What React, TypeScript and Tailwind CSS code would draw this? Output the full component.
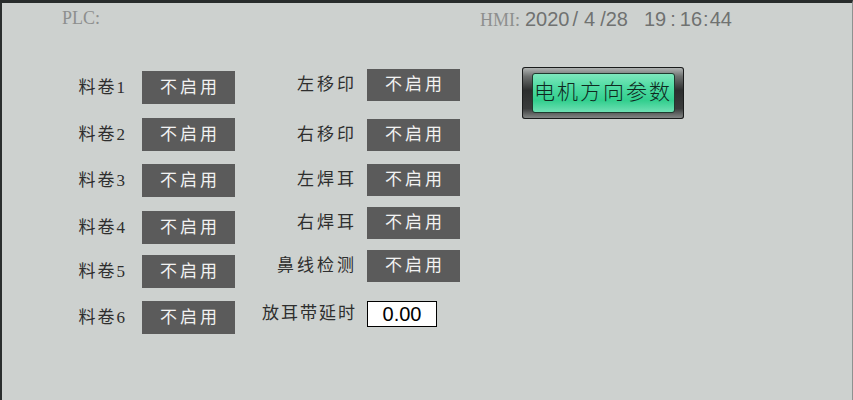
const serif = "font-['Liberation_Serif','Noto_Sans_CJK_SC',serif]"
const sans = "font-['Liberation_Sans','Noto_Sans_CJK_SC',sans-serif]"

const leftRows = [
  { label: '料卷1', mt: 'mt-0' },
  { label: '料卷2', mt: 'mt-[14px]' },
  { label: '料卷3', mt: 'mt-[13px]' },
  { label: '料卷4', mt: 'mt-[14px]' },
  { label: '料卷5', mt: 'mt-[11px]' },
  { label: '料卷6', mt: 'mt-[13px]' },
]

const rightRows = [
  { label: '左移印', mt: 'mt-0' },
  { label: '右移印', mt: 'mt-[18px]' },
  { label: '左焊耳', mt: 'mt-[13px]' },
  { label: '右焊耳', mt: 'mt-[11px]' },
  { label: '鼻线检测', mt: 'mt-[11px]' },
]

function OffButton({ tall = false }: { tall?: boolean }) {
  return (
    <div
      className={`flex w-[93px] items-center justify-center bg-[#5b5b5b] pl-[3px] text-[17px] tracking-[3px] text-[#f2f2f2] ${serif} ${
        tall ? 'h-[33px]' : 'h-[32px]'
      }`}
    >
      不启用
    </div>
  )
}

export default function App() {
  return (
    <div className="flex h-[400px] w-[853px] flex-col overflow-hidden border-t-[3px] border-l-2 border-r border-t-[#282c2c] border-l-[#2a2e2e] border-r-[#8e9290] bg-[#cdd1cf]">
      <div className="flex h-[31px] items-center">
        <div className={`w-[478px] pl-[60px] text-[18px] text-[#8d8f8e] ${serif}`}>PLC:</div>
        <div className="flex items-baseline text-[#707271]">
          <span className={`text-[18px] text-[#8d8f8e] ${serif}`}>HMI:</span>
          <span className={`ml-[5px] text-[20px] ${sans}`}>2020</span>
          <span className={`ml-[3px] text-[20px] font-light ${sans}`}>/</span>
          <span className={`ml-[6px] text-[20px] ${sans}`}>4</span>
          <span className={`ml-[5px] text-[20px] font-light ${sans}`}>/</span>
          <span className={`text-[20px] ${sans}`}>28</span>
          <span className={`ml-[16px] text-[20px] ${sans}`}>19</span>
          <span className={`mx-[4px] text-[20px] ${sans}`}>:</span>
          <span className={`text-[20px] ${sans}`}>16</span>
          <span className={`mx-[1px] text-[20px] ${sans}`}>:</span>
          <span className={`text-[20px] ${sans}`}>44</span>
        </div>
      </div>

      <div className="mt-[33px] flex pl-[58px]">
        <div className="flex flex-col pt-[4px]">
          {leftRows.map((r) => (
            <div key={r.label} className={`flex items-center ${r.mt}`}>
              <div className={`w-[67px] text-right text-[17px] tracking-[2px] text-[#2e2e2e] ${serif}`}>
                {r.label}
              </div>
              <div className="ml-[15px]">
                <OffButton tall />
              </div>
            </div>
          ))}
        </div>

        <div className="ml-[20px] flex flex-col pt-[2px]">
          {rightRows.map((r) => (
            <div key={r.label} className={`flex items-center ${r.mt}`}>
              <div className={`w-[102px] text-right text-[17px] tracking-[3px] text-[#2e2e2e] ${serif}`}>
                {r.label}
              </div>
              <div className="ml-[10px]">
                <OffButton />
              </div>
            </div>
          ))}
          <div className="mt-[19px] flex items-center">
            <div className={`w-[102px] text-right text-[17px] tracking-[2px] text-[#2e2e2e] ${serif}`}>放耳带延时</div>
            <div
              className={`ml-[10px] flex h-[26px] w-[70px] items-center justify-center border border-black bg-white text-[20px] text-black ${sans}`}
            >
              0.00
            </div>
          </div>
        </div>

        <div className="ml-[62px]">
          <div className="flex h-[52px] w-[162px] items-center justify-center rounded-[3px] bg-[linear-gradient(180deg,#b8bcbb_0%,#6d706f_18%,#2c2e2e_45%,#3a3c3c_80%,#8a8d8c_100%)] p-[5px] shadow-[inset_0_0_0_1px_#1a1c1c]">
            <div
              className={`flex h-[40px] w-[143px] items-center justify-center rounded-[3px] border border-[#1f3a2e] bg-[linear-gradient(180deg,#7de8bd_0%,#4fdba2_35%,#33cf8e_70%,#6fe0b4_100%)] text-[21px] font-light tracking-[2px] text-[#10291f] ${serif}`}
            >
              电机方向参数
            </div>
          </div>
        </div>
      </div>
    </div>
  )
}
